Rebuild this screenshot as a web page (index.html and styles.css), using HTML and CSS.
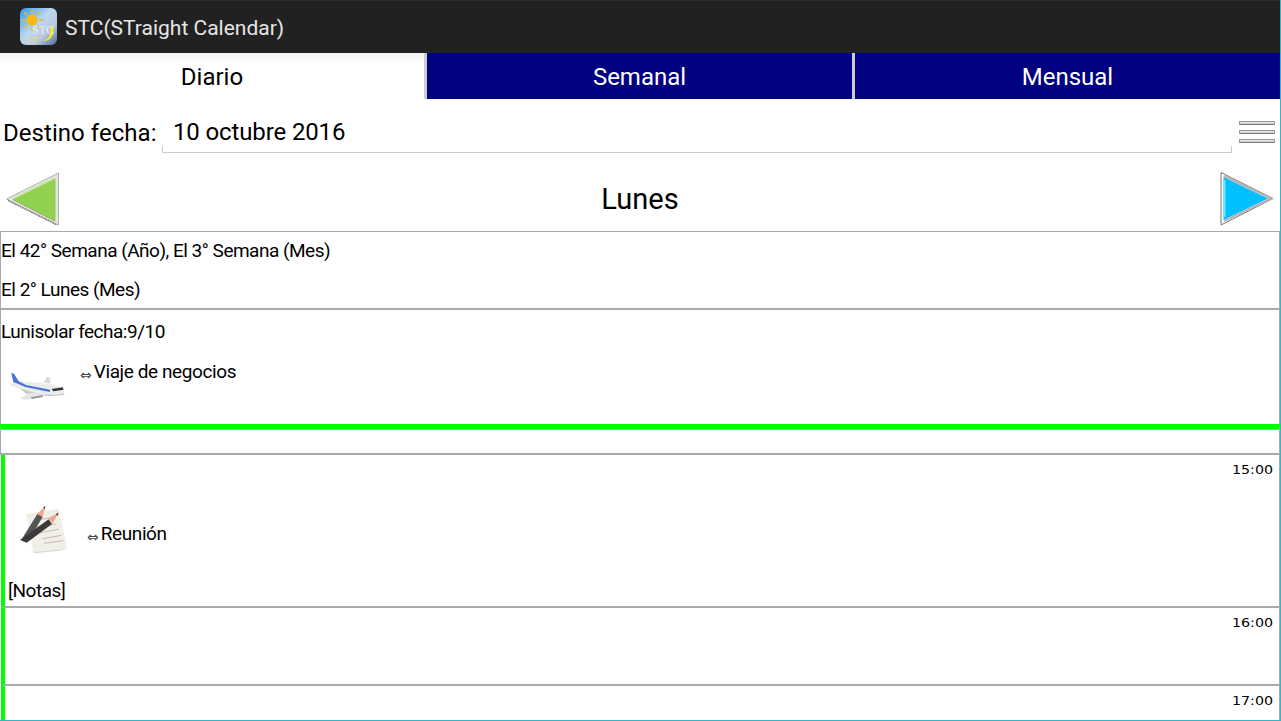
FILE: index.html
```html
<!DOCTYPE html>
<html lang="es">
<head>
<meta charset="utf-8">
<title>STC</title>
<link rel="stylesheet" href="styles.css">
</head>
<body>
<div class="app">
  <header class="bar">
    <svg class="logo" width="38" height="38" viewBox="0 0 38 38">
      <defs>
        <linearGradient id="sky" x1="0" y1="0" x2="1" y2="1">
          <stop offset="0" stop-color="#2f9ae8"/><stop offset=".45" stop-color="#bcd8f0"/><stop offset=".7" stop-color="#b8c8dc"/><stop offset="1" stop-color="#4a6a9c"/>
        </linearGradient>
      </defs>
      <rect x="0" y="0" width="37" height="37" rx="6" fill="url(#sky)"/>
      <g stroke="#e8b828" stroke-width="1.6">
        <path d="M12 1V5M12 19V23M1 12H5M19 12H24M4 4L7 7M17 17L20 20M20 4L17 7M7 17L4 20"/>
      </g>
      <circle cx="12" cy="12" r="5.500" fill="#fdb813"/>
      <path d="M33 18C35 26 31 34 22 33C28 32 32 27 30 20Z" fill="#f6ea20"/>
      <text x="12" y="26" class="logo-text">STC</text>
      <path d="M7 30H18M9 33H16" stroke="#e4d8a0" stroke-width="1.500"/>
    </svg>
    <span class="app-title">STC(STraight Calendar)</span>
  </header>
  <nav class="tabs">
    <div class="tab tab-on">Diario</div>
    <div class="tab">Semanal</div>
    <div class="tab">Mensual</div>
  </nav>
  <div class="date-row">
    <span class="date-label">Destino fecha:</span>
    <div class="date-field">10 octubre 2016</div>
    <div class="menu"><i></i><i></i><i></i></div>
  </div>
  <div class="day-row">
    <svg class="arrow" width="54" height="54" viewBox="0 0 54 54">
      <path d="M0.500 27L52.500 1V53Z" fill="#e4e4e4" stroke="#b0b0b0"/>
      <path d="M7 27L49.500 6V49Z" fill="#92d050"/>
      <path d="M7 26.500L49 6" stroke="#c4e89c" stroke-width="1.500"/>
      <path d="M7 27.500L49 49" stroke="#7db040" stroke-width="1"/>
      <path d="M2 28.500L51 53" stroke="#8c8c8c" stroke-width="1.500" stroke-dasharray="2 .6"/>
    </svg>
    <span class="day-name">Lunes</span>
    <svg class="arrow" width="54" height="54" viewBox="0 0 54 54">
      <path d="M1 0.500L53 26.500L1 53Z" fill="#fff" stroke="#777"/>
      <path d="M3.500 5L48 26.500L3.500 48Z" fill="#00bfff"/>
      <path d="M4 4L51 26.500L4 49" fill="none" stroke="#b4b4b4" stroke-width="2.200"/>
      <path d="M4.500 8V45" stroke="#62ecff" stroke-width="2"/>
    </svg>
  </div>
  <section class="info first">
    <p class="line l1">El 42° Semana (Año), El 3° Semana (Mes)</p>
    <p class="line l2">El 2° Lunes (Mes)</p>
  </section>
  <section class="info lunar">
    <p class="line l3">Lunisolar fecha:9/10</p>
    <div class="event">
      <svg class="plane" width="60" height="36" viewBox="24 60 180 108">
        <path d="M32 104L66 97L118 101L150 106L180 113L194 124L192 133L168 137L112 138L80 130L50 116L28 108Z" fill="#ececec"/>
        <path d="M60 118L112 134L168 137L192 133L194 137L160 141L110 141L78 134Z" fill="#c8c8c8"/>
        <path d="M132 100L140 84L151 86L150 104Z" fill="#d8d8d8"/>
        <path d="M34 72L42 74L56 97L78 108L150 122L150 129L76 114L50 103L40 100Z" fill="#4a74d4"/>
        <path d="M155 120L188 115L191 122L160 127Z" fill="#333"/>
        <path d="M86 132L150 134L110 146L84 152L60 150Z" fill="#e6e6e6"/>
        <path d="M92 145L128 138V144L96 150Z" fill="#999"/>
      </svg>
      <span class="event-text"><small>⇔</small>Viaje de negocios</span>
    </div>
  </section>
  <div class="all-day"></div>
  <section class="hours">
    <div class="hour h15">
      <time>15:00</time>
      <div class="event meeting">
        <svg class="note" width="54" height="54" viewBox="54 30 162 162">
          <path d="M78 72L176 56L202 176L100 186Z" fill="#f0efe8"/>
          <path d="M60 160L100 186L202 176L180 182L104 190Z" fill="#d8d8d4"/>
          <path d="M100 92L160 82M108 112L168 102M120 128L176 118M128 146L184 136M132 160L190 152" stroke="#cdb8ae" stroke-width="3"/>
          <path d="M66 146L112 72L128 80L86 152Z" fill="#555"/>
          <path d="M112 72L136 48L128 80Z" fill="#f0a488"/>
          <path d="M60 150L146 88L156 102L80 158Z" fill="#3a3a3a"/>
          <path d="M146 84L176 68L158 100Z" fill="#f0a488"/>
          <path d="M130 52L136 48L134 58ZM168 72L176 68L172 78Z" fill="#333"/>
        </svg>
        <span class="event-text"><small>⇔</small>Reunión</span>
      </div>
      <p class="notes">[Notas]</p>
    </div>
    <div class="hour h16"><time>16:00</time></div>
    <div class="hour h17"><time>17:00</time></div>
  </section>
</div>
</body>
</html>
```
FILE: styles.css
```css
html, body { margin: 0; padding: 0; background: #fff; }
body { font-family: Roboto, sans-serif; color: #000; overflow: hidden; }
p { margin: 0; }
.app { width: 1281px; height: 721px; box-sizing: border-box; border-right: 1px solid #33b5c5; border-bottom: 1px solid #33b5c5; overflow: hidden; }

.bar { height: 53px; box-sizing: border-box; background: #212121; border-top: 1px solid #2c2c2c; display: flex; align-items: center; padding-left: 20px; }
.logo { display: block; margin-top: -1px; }
.logo-text { font-family: "Liberation Serif", serif; font-size: 12px; fill: #e8eef5; }
.app-title { font-size: 21px; color: #e6e6e6; margin: 2px 0 0 7px; }

.tabs { height: 46px; display: flex; }
.tab { flex: 1 1 0; background: #000080; color: #fff; font-size: 24px; display: flex; align-items: center; justify-content: center; border-left: 3px solid #ccc; padding-top: 2px; box-sizing: border-box; }
.tab-on { background: linear-gradient(#f2f2f2, #fff 12px); color: #000; border-left: 0; flex: 0 0 424px; }
.tab:nth-child(2) { flex: 0 0 428px; }

.date-row { height: 60px; display: flex; align-items: flex-start; }
.date-label { font-size: 24px; letter-spacing: .05px; margin: 20px 0 0 3px; line-height: 28px; width: 159px; white-space: nowrap; }
.date-field { position: relative; width: 1070px; height: 43px; margin-top: 11px; padding-left: 11px; box-sizing: border-box; font-size: 24px; letter-spacing: -0.13px; line-height: 44px; }
.date-field::after { content: ""; position: absolute; left: 0; right: 0; bottom: 0; height: 7px; border: 1px solid #ccc; border-top: 0; box-sizing: border-box; }
.menu { display: flex; flex-direction: column; gap: 5px; margin: 22px 0 0 7px; }
.menu i { display: block; width: 36px; height: 4px; box-sizing: border-box; background: linear-gradient(#e8e8e8, #d0d0d0); border: 1px solid #999; border-bottom-color: #777; border-radius: 1px; }

.day-row { height: 72px; display: flex; align-items: center; justify-content: space-between; padding: 0 6px; box-sizing: border-box; }
.arrow { display: block; margin-top: 7px; }
.day-name { font-size: 29px; margin-top: 8px; }

.info { border: 1px solid #aaa; border-bottom: 0; box-sizing: border-box; }
.first { height: 77px; }
.lunar { height: 116px; border-top-width: 2px; }
.line { font-size: 19px; letter-spacing: -0.5px; line-height: 22px; white-space: nowrap; }
.l1 { padding-top: 8px; }
.l2 { padding-top: 17px; }
.l3 { padding-top: 11px; }

.event { display: flex; align-items: flex-start; }
.lunar .event { margin-top: 18px; padding-left: 7px; }
.plane { display: block; margin-top: 8px; }
.event-text { font-size: 19px; letter-spacing: -0.4px; line-height: 22px; margin-left: 12px; }
.event-text small { font-family: "DejaVu Sans", sans-serif; font-size: 14px; letter-spacing: 0; color: #444; margin-right: 2px; vertical-align: -2px; }

.all-day { height: 24px; border: 1px solid #aaa; border-top: 5px solid #0f0; border-bottom: 0; box-shadow: inset 0 1px #aaa; }
.hours { border-top: 2px solid #aaa; border-right: 1px solid #aaa; }
.hour { position: relative; margin-left: 1px; border-left: 4px solid #0f0; box-sizing: border-box; border-bottom: 2px solid #aaa; }
.h15 { height: 153px; }
.h16 { height: 78px; }
.h17 { height: 40px; border-bottom: 0; }
.hour time { position: absolute; top: 8px; right: 6px; font-family: "DejaVu Sans", sans-serif; font-size: 12.500px; line-height: 14px; transform: scaleX(1.140); transform-origin: right center; }
.meeting { padding: 45px 0 0 13px; }
.note { display: block; }
.meeting .event-text { margin: 23px 0 0 15px; }
.notes { font-size: 19px; letter-spacing: -0.5px; line-height: 22px; margin: 26px 0 0 3px; }
```
